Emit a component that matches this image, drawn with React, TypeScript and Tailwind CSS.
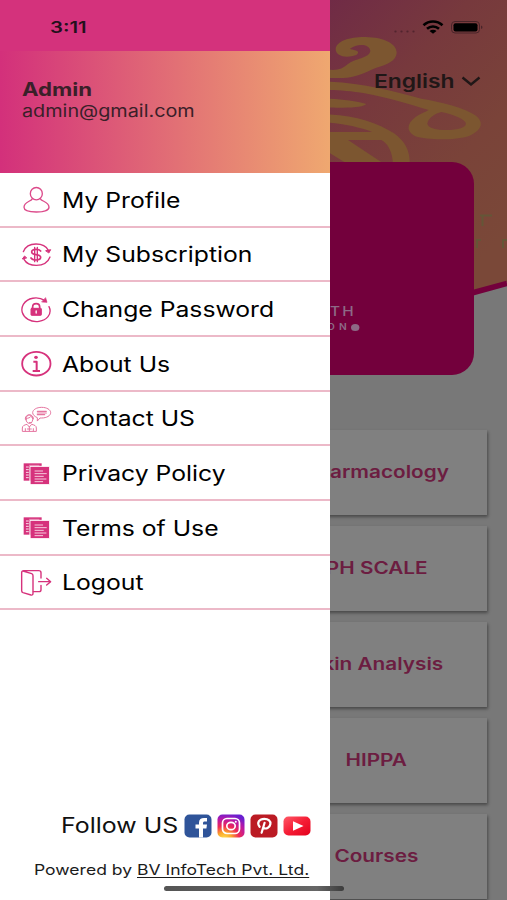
import type { ReactNode } from "react";

const PINK = "#d6327c";

function Icon({ children }: { children: ReactNode }) {
  return (
    <svg
      viewBox="0 0 96 90"
      className="h-[30px] w-8 shrink-0"
      fill="none"
      stroke={PINK}
      strokeLinecap="round"
      strokeLinejoin="round"
    >
      {children}
    </svg>
  );
}

const ProfileIcon = () => (
  <Icon>
    <g strokeWidth={4} stroke="#dc4a8a">
      <ellipse cx="49" cy="26" rx="18" ry="18.500" />
      <path d="M37 41C34 50 12 49 12 67c0 9 16 14 37 14s38-5 38-14c0-18-23-17-26-26" />
    </g>
  </Icon>
);

const SubscriptionIcon = () => (
  <Icon>
    <path d="M10 35C16 20 31 12 48 12c17 0 31 7 37 19" strokeWidth={4} />
    <path d="M90 51c-6 16-22 25-41 25-17 0-31-7-37-18" strokeWidth={4} />
    <path d="M78 32l14-3-5 9ZM19 54L7 57l6-8Z" fill={PINK} strokeWidth={3} />
    <path
      d="M62 33c-3-4-8-5-14-5-8 0-13 3-13 8 0 6 6 7 13 8s14 3 14 8c0 6-6 8-14 8-6 0-12-1-15-6"
      strokeWidth={5}
    />
    <path d="M44 22v43M52 22v43" strokeWidth={4} />
  </Icon>
);

const PasswordIcon = () => (
  <Icon>
    <path
      d="M75 17C52 2 22 9 10 28c-9 16-4 34 14 45 20 12 48 7 60-8 7-9 8-20 3-30"
      strokeWidth={4}
    />
    <path d="M77 9l4 13-15-1Z" fill={PINK} strokeWidth={2} />
    <path d="M38 40v-5c0-12 21-12 21 0v5" strokeWidth={5} />
    <rect x="33" y="40" width="31" height="21" rx="2" fill={PINK} strokeWidth={3} />
    <path d="M48.500 48v6" stroke="white" strokeWidth={4} />
  </Icon>
);

const AboutIcon = () => (
  <Icon>
    <ellipse cx="49" cy="44" rx="42.500" ry="35.500" strokeWidth={5.5} />
    <ellipse cx="48" cy="25" rx="5.500" ry="5" fill={PINK} stroke="none" />
    <path d="M40 38h10v27M38 66h22" strokeWidth={6} strokeLinecap="butt" />
  </Icon>
);

const ContactIcon = () => (
  <Icon>
    <g stroke="#e5749f" strokeWidth={3}>
      <path d="M52 50v-9C43 37 38 32 38 26c0-9 12-16 27-16s27 7 27 16-12 16-27 16h-4Z" />
      <path d="M52 22h27M52 27h27M52 32h22" strokeWidth={3.5} />
      <path d="M18 47c-3-19 23-19 20 0-1 15-19 15-20 0Z" />
      <path d="M16 45c-2-17 26-17 24 0M18 43c7 1 13-3 15-6l5 6M28 56h7" />
      <path d="M7 81v-9c0-7 6-9 14-11l7 8 7-8c8 2 14 4 14 11v9ZM16 81v-7M40 81v-7M28 69v12M22 75h12" />
    </g>
  </Icon>
);

const DocsIcon = () => (
  <Icon>
    <rect x="11" y="13" width="54" height="52" fill={PINK} stroke="none" />
    <path d="M19 24h6M19 32h6M19 40h6M19 48h6M19 56h6" stroke="white" strokeWidth={2.6} />
    <path d="M28 19h29" stroke="#f3b5d0" strokeWidth={2} />
    <rect x="31" y="22" width="58" height="55" fill={PINK} stroke="white" strokeWidth={3} />
    <path
      d="M45 36h23M45 44h34M45 52h25M45 60h33M45 68h23"
      stroke="#fbe3ee"
      strokeWidth={2.6}
    />
  </Icon>
);

const LogoutIcon = () => (
  <Icon>
    <g strokeWidth={4.2}>
      <path d="M9 9l26 8c3 1 4 3 4 6v53c0 4-2 6-6 5L9 74c-3-1-4-3-4-6V14c0-4 2-6 6-6h45c5 0 7 2 7 6v16" />
      <path d="M63 52v13c0 4-2 6-6 6H40" />
      <path d="M56 41h35M80 31l12 10-12 10" />
    </g>
  </Icon>
);

const menu = [
  { label: "My Profile", icon: ProfileIcon },
  { label: "My Subscription", icon: SubscriptionIcon },
  { label: "Change Password", icon: PasswordIcon },
  { label: "About Us", icon: AboutIcon },
  { label: "Contact US", icon: ContactIcon },
  { label: "Privacy Policy", icon: DocsIcon },
  { label: "Terms of Use", icon: DocsIcon },
  { label: "Logout", icon: LogoutIcon },
];

const courses = ["Pharmacology", "PH SCALE", "Skin Analysis", "HIPPA", "Courses"];

function SocialLinks() {
  return (
    <div className="flex items-center gap-[5px]">
      <svg viewBox="0 0 28 24" className="h-6 w-7">
        <rect x="0.500" y="0.500" width="27" height="23" rx="5" fill="#2f5499" />
        <path
          d="M15 23.500v-9h-3.500v-4H15V8.400C15 5.400 17 4 20 4h3v3.600h-2.200c-1.300 0-1.800.6-1.800 1.600v1.300h4l-.6 4H19v9Z"
          fill="white"
        />
      </svg>
      <svg viewBox="0 0 28 24" className="h-6 w-7">
        <defs>
          <radialGradient id="insta" cx="0.25" cy="1.05" r="1.1">
            <stop offset="0" stopColor="#ffe04f" />
            <stop offset="0.25" stopColor="#fba62c" />
            <stop offset="0.5" stopColor="#ef2a55" />
            <stop offset="0.78" stopColor="#b718a8" />
            <stop offset="1" stopColor="#6a1fd0" />
          </radialGradient>
        </defs>
        <rect x="0.500" y="0.500" width="27" height="23" rx="5" fill="url(#insta)" />
        <g fill="none" stroke="white" strokeWidth="1.700">
          <rect x="5.500" y="4.500" width="17" height="15" rx="4.500" />
          <ellipse cx="14" cy="12" rx="4.200" ry="3.700" />
        </g>
        <circle cx="18.800" cy="7.800" r="1" fill="white" />
      </svg>
      <svg viewBox="0 0 28 24" className="h-6 w-7">
        <rect x="0.500" y="0.500" width="27" height="23" rx="5" fill="#bb1b24" />
        <path
          d="M9.600 12.800C6.300 8.600 9.500 4.800 14.300 4.800c4.200 0 6.500 2.300 6.100 5.200-.5 3.700-4.700 5.700-7 3.600M14.600 8.800l-3 10"
          fill="none"
          stroke="white"
          strokeWidth="2.200"
          strokeLinecap="round"
        />
      </svg>
      <svg viewBox="0 0 28 24" className="h-6 w-7">
        <defs>
          <linearGradient id="tube" x1="0" y1="0" x2="1" y2="1">
            <stop offset="0" stopColor="#ff5a68" />
            <stop offset="0.500" stopColor="#f51d35" />
            <stop offset="1" stopColor="#e3001c" />
          </linearGradient>
        </defs>
        <rect x="0.500" y="2.500" width="27" height="19" rx="5" fill="url(#tube)" />
        <path d="M10 7.200l10.500 4.800L10 16.800Z" fill="white" />
      </svg>
    </div>
  );
}

function Drawer() {
  return (
    <aside className="z-10 flex h-full w-[330px] shrink-0 flex-col bg-white">
      <div className="h-[51px] bg-[#d4327c] pt-[17px] pl-[50px] text-[16px] leading-5 font-semibold text-[#24101c]">
        <span className="inline-block origin-left scale-x-[1.27]">3:11</span>
      </div>
      <div className="flex h-[122px] flex-col items-start bg-linear-to-r/srgb from-[#d3307b] to-[#efa870] pt-[27px] pl-[22px] text-[#3a2029]">
        <span className="origin-left scale-x-[1.2] text-[18.500px] leading-[22px] font-bold">
          Admin
        </span>
        <span className="origin-left scale-x-[1.165] text-[17px] leading-[22px]">
          admin@gmail.com
        </span>
      </div>
      <nav>
        {menu.map(({ label, icon: ItemIcon }) => (
          <a
            key={label}
            className="flex h-[54.660px] items-center border-b-2 border-[#ecb9c8] pt-0.5 pl-5"
          >
            <ItemIcon />
            <span className="ml-2.5 origin-left scale-x-[1.177] text-[21px] whitespace-nowrap text-black">
              {label}
            </span>
          </a>
        ))}
      </nav>
      <footer className="mt-auto h-[90px]">
        <div className="flex h-8 items-center pl-[61px]">
          <div className="w-[123px] text-[21px] whitespace-nowrap text-[#111]">
            <span className="inline-block origin-left scale-x-[1.187]">Follow US</span>
          </div>
          <SocialLinks />
        </div>
        <p className="mt-[18px] ml-[34px] w-[220px] origin-left scale-x-[1.21] text-[14.500px] leading-5 whitespace-nowrap text-[#1c1c1c]">
          Powered by <span className="underline underline-offset-2">BV InfoTech Pvt. Ltd.</span>
        </p>
      </footer>
    </aside>
  );
}

function HeroArt() {
  return (
    <svg viewBox="330 0 177 310" className="absolute top-0 left-0 h-[310px] w-[177px]">
      <defs>
        <linearGradient id="hero" x1="0" y1="0" x2="0.6" y2="1">
          <stop offset="0" stopColor="#702b46" />
          <stop offset="0.350" stopColor="#77393d" />
          <stop offset="0.700" stopColor="#7a4339" />
          <stop offset="1" stopColor="#7a4838" />
        </linearGradient>
      </defs>
      <path d="M330 0H507V282Q460 297 400 306H330Z" fill="url(#hero)" />
      <path d="M470 293.500L507 283.500" stroke="#73003c" strokeWidth="5.500" />
      {/* gold ornament behind the logo card */}
      <g transform="translate(328 30) scale(0.3333)" fill="#7c5630" fillRule="evenodd">
        <path d="M74 78C48 84 24 77 23 58C24 32 70 20 112 21C170 22 206 42 206 68C205 92 178 104 145 113C110 128 80 143 45 144H0V119C30 122 44 116 60 102C78 86 126 84 127 62C125 40 85 40 66 56C72 60 92 60 90 68C89 74 82 76 74 78Z" />
        <path d="M0 155C100 158 200 184 280 206C340 216 410 232 445 258C472 282 455 302 425 317C380 332 300 331 262 319C232 303 238 280 262 262C275 252 290 247 302 240C250 225 180 203 110 190C70 183 30 180 0 180ZM340 246C322 250 300 264 298 281C300 294 325 300 355 300C392 300 414 292 414 281C413 268 378 254 340 246Z" />
        <path d="M0 206C40 208 85 213 115 222C105 231 75 235 0 232Z" />
        <path d="M0 253C80 256 150 278 198 310C232 334 246 365 245 400H195C193 366 180 340 160 330H60L165 400H55L0 366ZM0 278V306H132C100 292 40 281 0 278Z" />
      </g>
      <g stroke="#5f5a37" strokeWidth="2" fill="none" opacity="0.8">
        <path d="M480 215.500H492M482.500 215V226M477 248V240H481M503 248V240H507" />
      </g>
    </svg>
  );
}

function HomeScreen() {
  return (
    <main className="relative h-full w-[177px] overflow-hidden bg-[#787878]">
      <HeroArt />
      <div className="relative flex h-[51px] items-start pt-[19px] pl-16">
        <svg viewBox="394 19 90 18" className="h-[18px] w-[90px]">
          <g fill="#52242e">
            <circle cx="395.500" cy="31.500" r="1.100" />
            <circle cx="401.500" cy="31.500" r="1.100" />
            <circle cx="407.500" cy="31.500" r="1.100" />
            <circle cx="413.500" cy="31.500" r="1.100" />
          </g>
          <g fill="none" stroke="black" strokeWidth="2.600">
            <path d="M423.500 25.300C429 20.200 437 20.200 442.500 25.300" />
            <path d="M427 28.800C430.500 25.700 435.500 25.700 439 28.800" />
          </g>
          <path d="M429.500 31C431.500 29.300 434.500 29.300 436.500 31L433 33.800Z" />
          <rect x="451.500" y="21.500" width="28" height="11.500" rx="3.500" fill="none" stroke="#492429" />
          <rect x="453.500" y="23.200" width="24" height="8.200" rx="2" />
          <path d="M481 25.500c2 .5 2 3 0 3.500Z" fill="#492429" />
        </svg>
      </div>
      <div className="relative flex h-[111px] items-start pt-[19px] pl-11 text-[#201717]">
        <div className="w-[87px] text-[18.500px] leading-[22px] font-semibold">
          <span className="inline-block origin-left scale-x-[1.235]">English</span>
        </div>
        <svg viewBox="0 0 20 10" className="mt-1.5 h-2.5 w-5">
          <path d="M1.500 1.500L10 8.500L18.500 1.500" fill="none" stroke="currentColor" strokeWidth="2.400" />
        </svg>
      </div>
      <div className="relative flex h-[213px] w-[144px] flex-col items-start rounded-r-[22px] bg-[#73003c] pt-[141px] text-[#8d6a86]">
        <span className="origin-left scale-x-[1.18] text-[13px] leading-4 font-medium tracking-[2px]">
          TH
        </span>
        <span className="-ml-[3px] flex origin-left scale-x-[1.2] items-center text-[8.500px] leading-[16px] font-semibold tracking-[3.500px]">
          ON
          <i className="h-[7px] w-[7px] rounded-full bg-[#8d6a86]" />
        </span>
      </div>
      <div className="relative mt-[55px] -ml-16 flex w-[221px] flex-col gap-[11px]">
        {courses.map((name) => (
          <div
            key={name}
            className="flex h-[85px] items-center justify-center bg-[#808080] text-[17px] font-semibold whitespace-nowrap text-[#6c1d41] shadow-[1px_2px_3px_rgba(0,0,0,0.4)]"
          >
            <span className="scale-x-[1.22]">{name}</span>
          </div>
        ))}
      </div>
    </main>
  );
}

export default function App() {
  return (
    <div className="relative flex h-[900px] w-[507px] overflow-hidden font-['Inter','Liberation_Sans',sans-serif]">
      <Drawer />
      <HomeScreen />
      <div className="absolute bottom-[9px] left-[164px] z-20 h-[5px] w-[180px] rounded-full bg-linear-to-r from-[#555] via-[#666] via-85% to-[#3c3c3c]" />
    </div>
  );
}
